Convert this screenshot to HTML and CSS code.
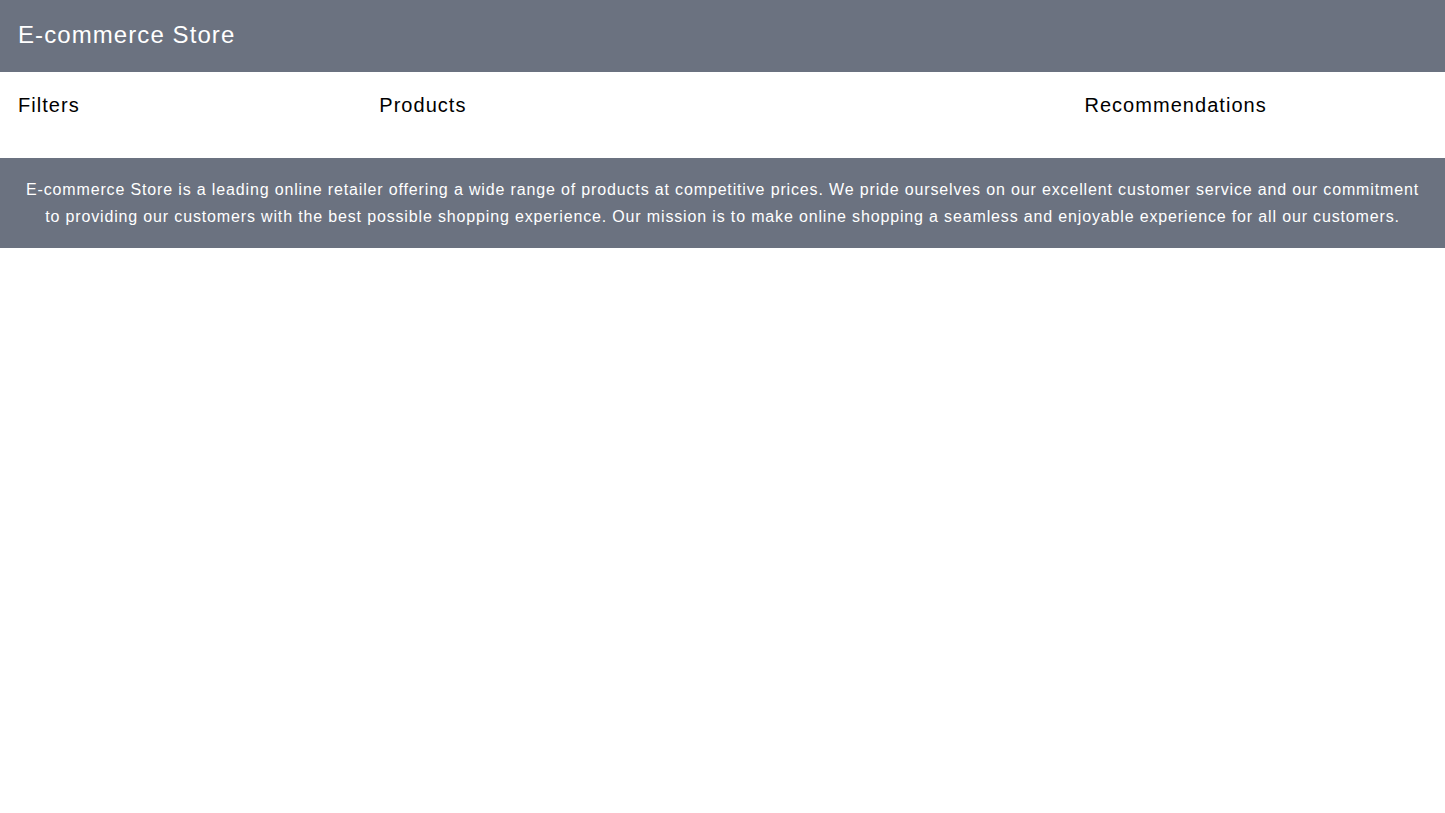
FILE: index.html
```html
<!DOCTYPE html>
<html lang="en">
<head>
    <meta charset="UTF-8">
    <meta name="viewport" content="width=device-width, initial-scale=1.0">
    <title>E-commerce Store</title>
    <link rel="stylesheet" href="styles.css">
</head>
<body>
    <header class="top-bar">
        <h1>E-commerce Store</h1>
    </header>

    <main class="layout">
        <!-- Columna de filtros -->
        <section class="col">
            <h2>Filters</h2>
        </section>
        <!-- Columna de productos -->
        <section class="col">
            <h2>Products</h2>
        </section>
        <!-- Columna de recomendaciones -->
        <section class="col">
            <h2>Recommendations</h2>
        </section>
    </main>

    <footer class="bottom-bar">
        <p>E-commerce Store is a leading online retailer offering a wide range of products at competitive prices. We pride ourselves on our excellent customer service and our commitment to providing our customers with the best possible shopping experience. Our mission is to make online shopping a seamless and enjoyable experience for all our customers.</p>
    </footer>
</body>
</html>
```

FILE: styles.css
```css
body {
    font-family: "Liberation Sans", Arial, sans-serif;
    letter-spacing: 0.05em;
    background-color: #fff;
    color: #000;
    margin: 0;
}
.top-bar {
    background-color: #6b7280;
    color: #fff;
    padding: 19px 18px 21px;
}
.top-bar h1 {
    font-size: 24px;
    font-weight: normal;
    letter-spacing: 0.045em;
    line-height: 32px;
    margin: 0;
}
.layout {
    display: grid;
    grid-template-columns: 25% 48.8% 1fr;
    padding-bottom: 24px;
}
.col {
    padding: 19px 18px 15px;
}
.col h2 {
    font-size: 20px;
    font-weight: normal;
    letter-spacing: 0.052em;
    line-height: 28px;
    margin: 0;
}
.bottom-bar {
    background-color: #6b7280;
    color: #fff;
    padding: 18px 24px;
    text-align: center;
}
.bottom-bar p {
    font-size: 16px;
    letter-spacing: 0.053em;
    line-height: 27px;
    margin: 0;
}
```
